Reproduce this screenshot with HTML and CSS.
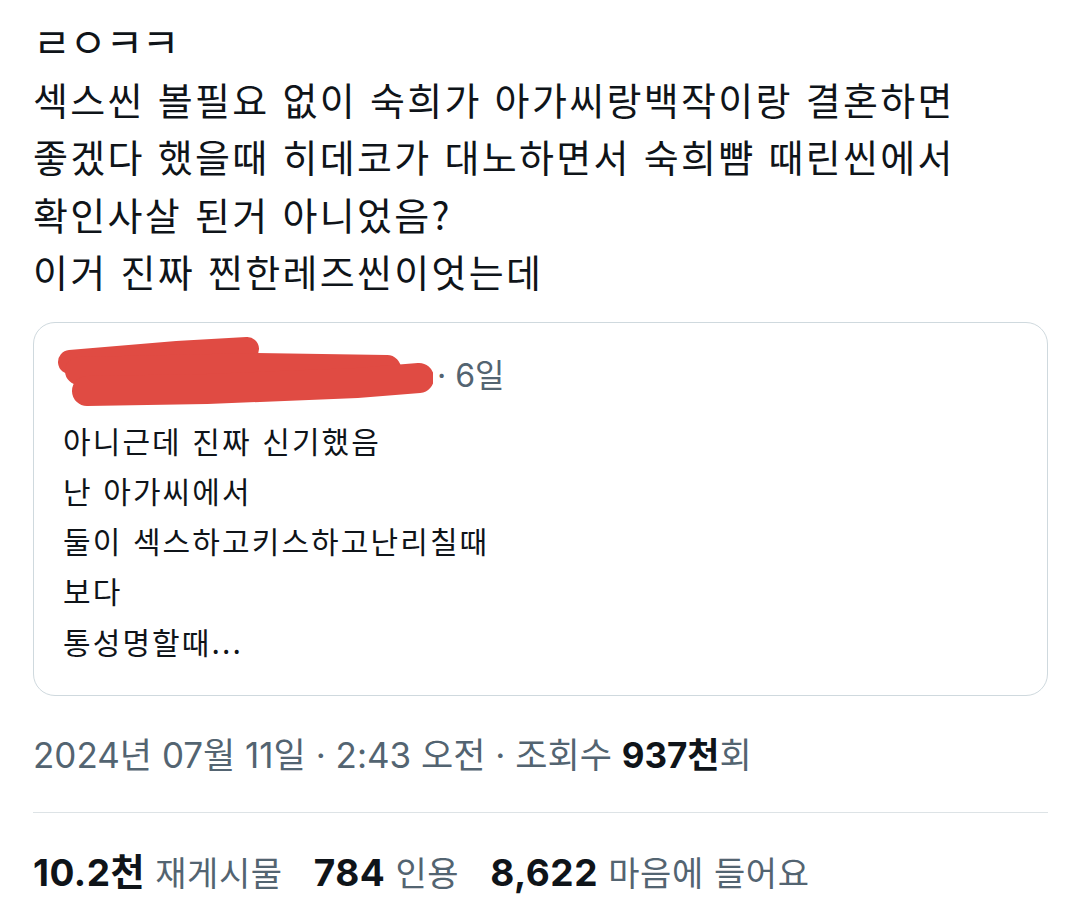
FILE: index.html
```html
<!DOCTYPE html>
<html lang="ko">
<head>
<meta charset="utf-8">
<link rel="stylesheet" href="styles.css">
</head>
<body>
<main class="tweet">
  <div class="tweet-text">
    <div class="jamo">ㄹㅇㅋㅋ</div>
    <div>섹스씬 볼필요 없이 숙희가 아가씨랑백작이랑 결혼하면</div>
    <div>좋겠다 했을때 히데코가 대노하면서 숙희뺨 때린씬에서</div>
    <div>확인사살 된거 아니었음?</div>
    <div>이거 진짜 찐한레즈씬이엇는데</div>
  </div>
  <section class="quote">
    <div class="quote-head">
      <svg class="scribble" width="376" height="72" viewBox="0 0 376 72">
        <g stroke="#e04b43" stroke-linecap="round" fill="none">
          <path d="M13 25 L120 16 L190 12" stroke-width="24"/>
          <path d="M22 34 L200 30 L330 32" stroke-width="28"/>
          <path d="M30 54 L150 52 L300 46 L362 41" stroke-width="30"/>
        </g>
      </svg>
      <span class="quote-time">· 6일</span>
    </div>
    <div class="quote-text">
      <div>아니근데 진짜 신기했음</div>
      <div>난 아가씨에서</div>
      <div>둘이 섹스하고키스하고난리칠때</div>
      <div>보다</div>
      <div>통성명할때...</div>
    </div>
  </section>
  <div class="meta">2024년 07월 11일 · 2:43 오전 · 조회수 <b class="strong">937천</b>회</div>
  <hr class="divider">
  <div class="stats">
    <span class="stat"><b class="num">10.2천</b> 재게시물</span>
    <span class="stat"><b class="num">784</b> 인용</span>
    <span class="stat"><b class="num">8,622</b> 마음에 들어요</span>
  </div>
</main>
</body>
</html>
```
FILE: styles.css
```css
html, body {
  margin: 0;
  padding: 0;
  background: #ffffff;
}
body {
  font-family: "Noto Sans CJK KR", "Noto Sans", sans-serif;
  color: #0f1419;
}
.tweet {
  padding: 12px 32px 0 33px;
}
.tweet-text {
  font-size: 38px;
  line-height: 57.5px;
  letter-spacing: 2.3px;
}
.jamo {
  font-size: 41px;
  letter-spacing: -1.5px;
}
.quote {
  margin-top: 22px;
  border: 1px solid #cfd9de;
  border-radius: 22px;
  padding: 15px 29px 29px 29px;
}
.quote-head {
  display: flex;
  align-items: center;
  height: 70px;
}
.scribble {
  display: block;
  margin-left: -6px;
  flex: none;
}
.quote-time {
  font-family: Inter, "Noto Sans CJK KR", sans-serif;
  color: #536471;
  font-size: 32px;
  margin-left: 4px;
}
.quote-text {
  margin-top: 7px;
  font-size: 30px;
  line-height: 50.25px;
  letter-spacing: 2.1px;
}
.meta {
  margin-top: 39px;
  font-family: Inter, "Noto Sans CJK KR", sans-serif;
  font-size: 35px;
  line-height: 40px;
  color: #536471;
}
.strong {
  color: #0f1419;
  font-weight: 700;
}
.divider {
  margin: 37px 0 0 0;
  border: 0;
  height: 1px;
  background: #dde3e6;
}
.stats {
  margin-top: 40px;
  display: flex;
  gap: 31px;
  font-family: Inter, "Noto Sans CJK KR", sans-serif;
  font-size: 34px;
  line-height: 40px;
  color: #536471;
  letter-spacing: 0.6px;
}
.num {
  color: #0f1419;
  font-weight: 700;
  font-size: 37px;
  letter-spacing: 0.5px;
}
```
